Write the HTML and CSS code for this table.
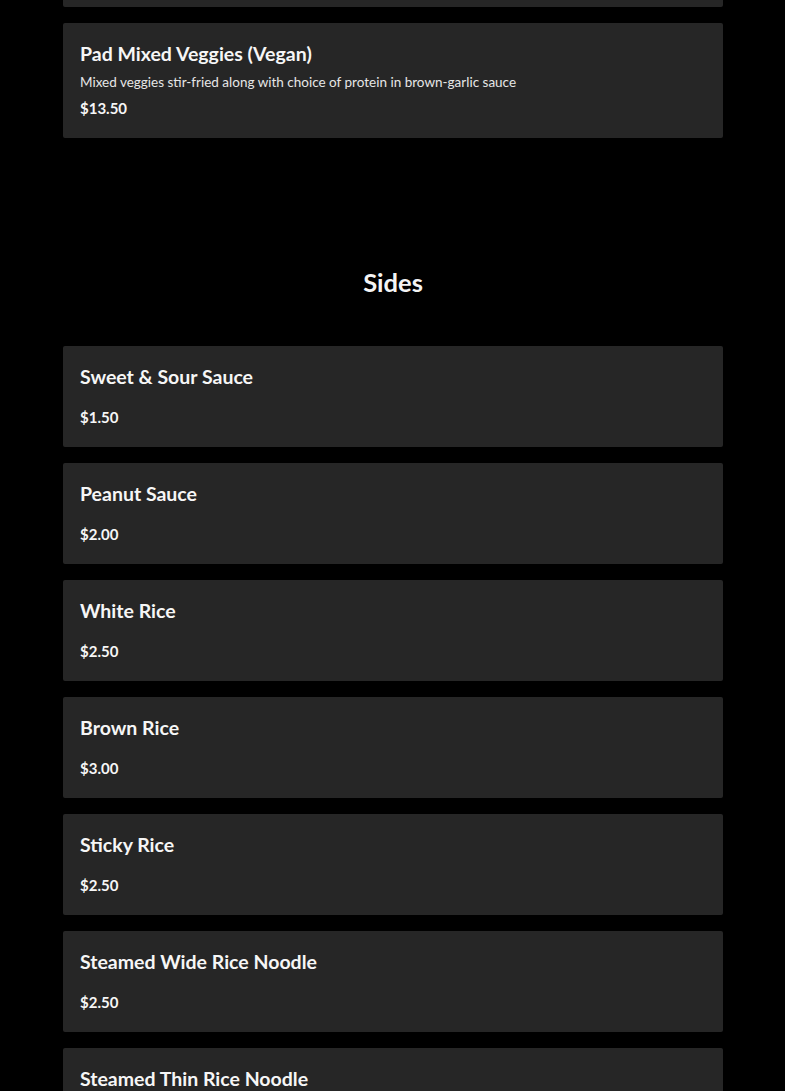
FILE: index.html
```html
<!DOCTYPE html>
<html lang="en">
<head>
<meta charset="utf-8">
<title>Menu</title>
<link rel="stylesheet" href="styles.css">
</head>
<body>
<main class="page">
  <section class="section first">
    <div class="list">
      <article class="item">
        <h3 class="title">Pad Prik Khing</h3>
        <p class="desc">Green beans stir-fried with choice of protein in red curry paste</p>
        <div class="price">$13.50</div>
      </article>
      <article class="item">
        <h3 class="title">Pad Mixed Veggies (Vegan)</h3>
        <p class="desc">Mixed veggies stir-fried along with choice of protein in brown-garlic sauce</p>
        <div class="price">$13.50</div>
      </article>
    </div>
  </section>
  <section class="section">
    <h2 class="heading">Sides</h2>
    <div class="list">
      <article class="item"><h3 class="title">Sweet &amp; Sour Sauce</h3><div class="price">$1.50</div></article>
      <article class="item"><h3 class="title">Peanut Sauce</h3><div class="price">$2.00</div></article>
      <article class="item"><h3 class="title">White Rice</h3><div class="price">$2.50</div></article>
      <article class="item"><h3 class="title">Brown Rice</h3><div class="price">$3.00</div></article>
      <article class="item"><h3 class="title">Sticky Rice</h3><div class="price">$2.50</div></article>
      <article class="item"><h3 class="title">Steamed Wide Rice Noodle</h3><div class="price">$2.50</div></article>
      <article class="item"><h3 class="title">Steamed Thin Rice Noodle</h3><div class="price">$2.50</div></article>
    </div>
  </section>
</main>
</body>
</html>
```
FILE: styles.css
```css
html, body {
  margin: 0;
  padding: 0;
  background: #000;
  color: #f4f4f4;
  font-family: Lato, "Noto Sans", sans-serif;
}
.page {
  padding: 0 62px 0 63px;
}
.section.first {
  margin-top: -108px;
}
.list {
  display: flex;
  flex-direction: column;
  gap: 16px;
}
.item {
  background: #262626;
  border-radius: 2px;
  padding: 17px 17px 20px;
}
.title {
  margin: 0;
  font-size: 19.5px;
  line-height: 28px;
  font-weight: 700;
  color: #f6f6f6;
}
.desc {
  margin: 4px 0 0;
  font-size: 13.5px;
  line-height: 20px;
  color: #e6e6e6;
  font-weight: 400;
}
.price {
  font-size: 15px;
  line-height: 20px;
  font-weight: 700;
  color: #f6f6f6;
}
.title + .price {
  margin-top: 16px;
}
.desc + .price {
  margin-top: 6px;
}
.heading {
  margin: 129px 0 49px;
  text-align: center;
  font-size: 25.5px;
  line-height: 30px;
  font-weight: 700;
}
```
